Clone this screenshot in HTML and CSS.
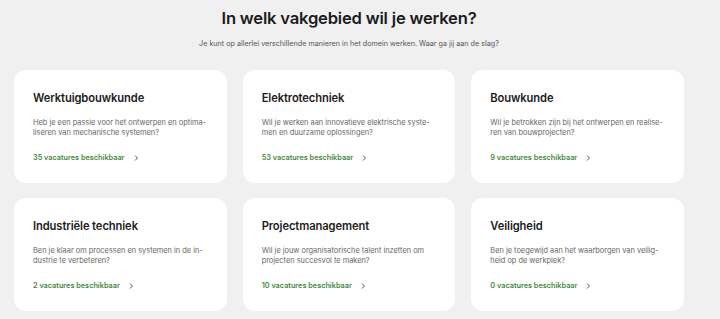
FILE: index.html
```html
<!DOCTYPE html>
<html lang="nl">
<head>
<meta charset="UTF-8">
<meta name="viewport" content="width=device-width, initial-scale=1.0">
<title>Vakgebieden</title>
<link rel="stylesheet" href="styles.css">
</head>
<body>

<!-- INTRO -->
<section class="intro">
    <h1>In welk vakgebied wil je werken?</h1>
    <p>Je kunt op allerlei verschillende manieren in het domein werken. Waar ga jij aan de slag?</p>
</section>

<!-- CARDS -->
<section class="fields">
    <a class="field-card" href="#">
        <h2>Werktuigbouwkunde</h2>
        <p>Heb je een passie voor het ontwerpen en optima-<br>liseren van mechanische systemen?</p>
        <span class="jobs">35 vacatures beschikbaar <svg viewBox="0 0 8 8"><path d="M3 1.5 5.5 4 3 6.5"/></svg></span>
    </a>
    <a class="field-card" href="#">
        <h2>Elektrotechniek</h2>
        <p>Wil je werken aan innovatieve elektrische syste-<br>men en duurzame oplossingen?</p>
        <span class="jobs">53 vacatures beschikbaar <svg viewBox="0 0 8 8"><path d="M3 1.5 5.5 4 3 6.5"/></svg></span>
    </a>
    <a class="field-card" href="#">
        <h2>Bouwkunde</h2>
        <p>Wil je betrokken zijn bij het ontwerpen en realise-<br>ren van bouwprojecten?</p>
        <span class="jobs">9 vacatures beschikbaar <svg viewBox="0 0 8 8"><path d="M3 1.5 5.5 4 3 6.5"/></svg></span>
    </a>
    <a class="field-card" href="#">
        <h2>Industriële techniek</h2>
        <p>Ben je klaar om processen en systemen in de in-<br>dustrie te verbeteren?</p>
        <span class="jobs">2 vacatures beschikbaar <svg viewBox="0 0 8 8"><path d="M3 1.5 5.5 4 3 6.5"/></svg></span>
    </a>
    <a class="field-card" href="#">
        <h2>Projectmanagement</h2>
        <p>Wil je jouw organisatorische talent inzetten om<br>projecten succesvol te maken?</p>
        <span class="jobs">10 vacatures beschikbaar <svg viewBox="0 0 8 8"><path d="M3 1.5 5.5 4 3 6.5"/></svg></span>
    </a>
    <a class="field-card" href="#">
        <h2>Veiligheid</h2>
        <p>Ben je toegewijd aan het waarborgen van veilig-<br>heid op de werkplek?</p>
        <span class="jobs">0 vacatures beschikbaar <svg viewBox="0 0 8 8"><path d="M3 1.5 5.5 4 3 6.5"/></svg></span>
    </a>
</section>

</body>
</html>
```

FILE: styles.css
```css
* {
    margin: 0;
    padding: 0;
    box-sizing: border-box;
}

html, body {
    width: 100%;
    height: 100%;
    background: #f0f0f0;
    color: #1c1c1c;
    font-family: Inter, 'Liberation Sans', Arial, sans-serif;
    overflow: hidden;
}

/* =======================
     INTRO
======================== */
.intro {
    width: 670px;
    margin-left: 14px;
    padding-top: 5px;
    text-align: center;
}

.intro h1 {
    font-size: 16.6px;
    line-height: 26px;
    font-weight: 600;
    letter-spacing: -0.2px;
}

.intro p {
    margin-top: 8px;
    font-size: 7.2px;
    line-height: 10px;
    color: #555;
}

/* =======================
     FIELD CARDS
======================== */
.fields {
    width: 670px;
    margin: 21px 0 0 14px;
    display: grid;
    grid-template-columns: repeat(3, 1fr);
    gap: 15px 16px;
}

.field-card {
    height: 113px;
    padding: 21px 19px 0;
    background: #fff;
    border-radius: 12px;
    text-decoration: none;
    color: inherit;
    display: flex;
    flex-direction: column;
}

.field-card h2 {
    font-size: 11.2px;
    line-height: 14px;
    font-weight: 600;
    letter-spacing: -0.1px;
}

.field-card p {
    margin-top: 13px;
    font-size: 7.4px;
    line-height: 10px;
    color: #666;
}

.jobs {
    margin-top: 15px;
    display: flex;
    align-items: center;
    gap: 7px;
    font-size: 7.3px;
    line-height: 10px;
    font-weight: 600;
    color: #3f8a3a;
}

.jobs svg {
    width: 8px;
    height: 8px;
    fill: none;
    stroke: #555;
    stroke-width: 1;
}
```
